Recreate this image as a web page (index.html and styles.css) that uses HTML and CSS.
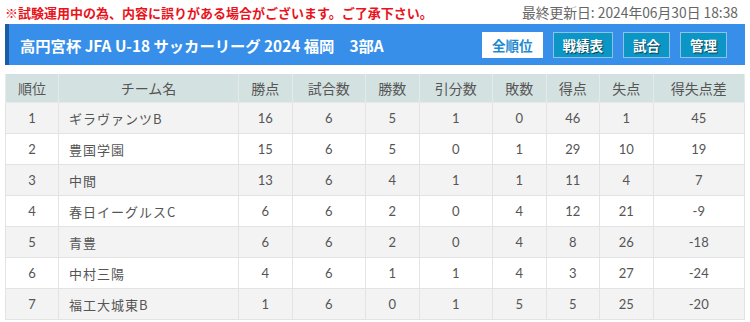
FILE: index.html
```html
<!DOCTYPE html>
<html lang="ja">
<head>
<meta charset="utf-8">
<link rel="stylesheet" href="styles.css">
</head>
<body>
<div class="topline">
  <span class="notice">※試験運用中の為、内容に誤りがある場合がございます。ご了承下さい。</span>
  <span class="updated">最終更新日: 2024年06月30日 18:38</span>
</div>
<div class="titlebar">
  <h1 class="title">高円宮杯 JFA U-18 サッカーリーグ 2024 福岡　3部A</h1>
  <div class="nav">
    <a class="btn active">全順位</a>
    <a class="btn">戦績表</a>
    <a class="btn">試合</a>
    <a class="btn">管理</a>
  </div>
</div>
<table class="standings">
  <colgroup>
    <col class="c-rank"><col class="c-team"><col class="c-n1"><col class="c-n2"><col class="c-n1"><col class="c-n2"><col class="c-n1"><col class="c-n1"><col class="c-n1"><col>
  </colgroup>
  <thead>
    <tr><th>順位</th><th>チーム名</th><th>勝点</th><th>試合数</th><th>勝数</th><th>引分数</th><th>敗数</th><th>得点</th><th>失点</th><th>得失点差</th></tr>
  </thead>
  <tbody>
    <tr><td>1</td><td class="team">ギラヴァンツB</td><td>16</td><td>6</td><td>5</td><td>1</td><td>0</td><td>46</td><td>1</td><td>45</td></tr>
    <tr><td>2</td><td class="team">豊国学園</td><td>15</td><td>6</td><td>5</td><td>0</td><td>1</td><td>29</td><td>10</td><td>19</td></tr>
    <tr><td>3</td><td class="team">中間</td><td>13</td><td>6</td><td>4</td><td>1</td><td>1</td><td>11</td><td>4</td><td>7</td></tr>
    <tr><td>4</td><td class="team">春日イーグルスC</td><td>6</td><td>6</td><td>2</td><td>0</td><td>4</td><td>12</td><td>21</td><td>-9</td></tr>
    <tr><td>5</td><td class="team">青豊</td><td>6</td><td>6</td><td>2</td><td>0</td><td>4</td><td>8</td><td>26</td><td>-18</td></tr>
    <tr><td>6</td><td class="team">中村三陽</td><td>4</td><td>6</td><td>1</td><td>1</td><td>4</td><td>3</td><td>27</td><td>-24</td></tr>
    <tr><td>7</td><td class="team">福工大城東B</td><td>1</td><td>6</td><td>0</td><td>1</td><td>5</td><td>5</td><td>25</td><td>-20</td></tr>
  </tbody>
</table>
</body>
</html>
```
FILE: styles.css
```css
html, body { margin: 0; padding: 0; background: #fff; }
body {
  padding: 0 5px;
  font-family: Lato, "Noto Sans CJK JP", sans-serif;
  color: #555;
}
.topline {
  display: flex;
  justify-content: space-between;
  align-items: center;
  height: 24px;
  font-size: 13px;
  padding-right: 7px;
}
.notice {
  color: #e8131b;
  font-weight: bold;
  font-family: "Noto Sans CJK JP", sans-serif;
}
.updated {
  color: #666;
  font-size: 13.8px;
  font-family: "Noto Sans CJK JP", sans-serif;
}
.titlebar {
  display: flex;
  align-items: center;
  justify-content: space-between;
  height: 41px;
  background: #378fe9;
  border-left: 4px solid #1a5da5;
  padding: 0 18px 0 11px;
}
.title {
  margin: 0;
  font-size: 15.3px;
  font-weight: bold;
  color: #fff;
  font-family: "Noto Sans CJK JP", sans-serif;
}
.nav { display: flex; gap: 10px; }
.btn {
  display: flex;
  align-items: center;
  justify-content: center;
  height: 24px;
  padding: 0 9px;
  font-size: 13.5px;
  font-weight: bold;
  font-family: "Noto Sans CJK JP", sans-serif;
  background: #0b96c6;
  color: #fff;
  border: 1px solid #8cc3ea;
  text-shadow: 1px 1px 1px rgba(0,0,0,0.6);
}
.btn.active {
  background: #fff;
  color: #1d8ad0;
  border-color: #fff;
  text-shadow: none;
}
.standings {
  margin-top: 9px;
  width: 740px;
  border-collapse: collapse;
  table-layout: fixed;
  font-size: 13px;
}
.c-rank { width: 53px; }
.c-team { width: 180px; }
.c-n1 { width: 53.5px; }
.c-n2 { width: 73.5px; }
.standings th {
  background: #d4e1e1;
  height: 28px;
  padding: 0;
  font-weight: normal;
  color: #555;
  font-size: 14px;
  border: 1px solid #e4eaea;
  border-top: none;
  font-family: "Noto Sans CJK JP", sans-serif;
}
.standings td {
  height: 30px;
  padding: 0;
  text-align: center;
  border: 1px solid #e3e3e3;
  color: #555;
}
.standings td.team {
  text-align: left;
  padding-left: 10px;
  font-family: "Noto Sans CJK JP", sans-serif;
  letter-spacing: 1px;
}
.standings tbody tr:nth-child(odd) td { background: #f3f3f3; }
.standings tbody tr:nth-child(even) td { background: #fff; }
```
